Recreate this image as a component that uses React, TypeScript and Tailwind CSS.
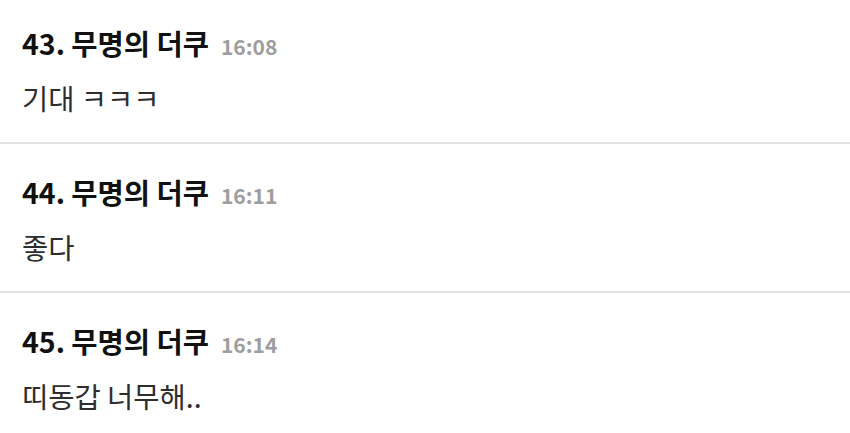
import React from "react";

const items = [
  { n: 43, t: "16:08", body: "기대 ㅋㅋㅋ", pt: "pt-[27px]" },
  { n: 44, t: "16:11", body: "좋다", pt: "pt-[32px]" },
  { n: 45, t: "16:14", body: "띠동갑 너무해..", pt: "pt-[32px]" },
];

export default function App() {
  return (
    <div
      className="w-[850px] h-[433px] overflow-hidden bg-white"
      style={{ fontFamily: '"Noto Sans CJK KR", "Noto Sans", sans-serif' }}
    >
      {items.map((it, i) => (
        <div
          key={it.n}
          className={`${it.pt} pb-[28px] px-[22px] ${i < 2 ? "border-b-2 border-[#e2e2e2]" : ""}`}
        >
          <div className="flex items-baseline h-[32px] leading-[32px]">
            <span className="text-[28.5px] font-bold text-[#111]">
              {it.n}. 무명의 더쿠
            </span>
            <span className="ml-[12px] text-[21px] font-bold text-[#9e9e9e]">{it.t}</span>
          </div>
          <div className="mt-[23px] h-[32px] leading-[32px] text-[28.5px] text-[#2e2e2e]">
            {it.body}
          </div>
        </div>
      ))}
    </div>
  );
}
